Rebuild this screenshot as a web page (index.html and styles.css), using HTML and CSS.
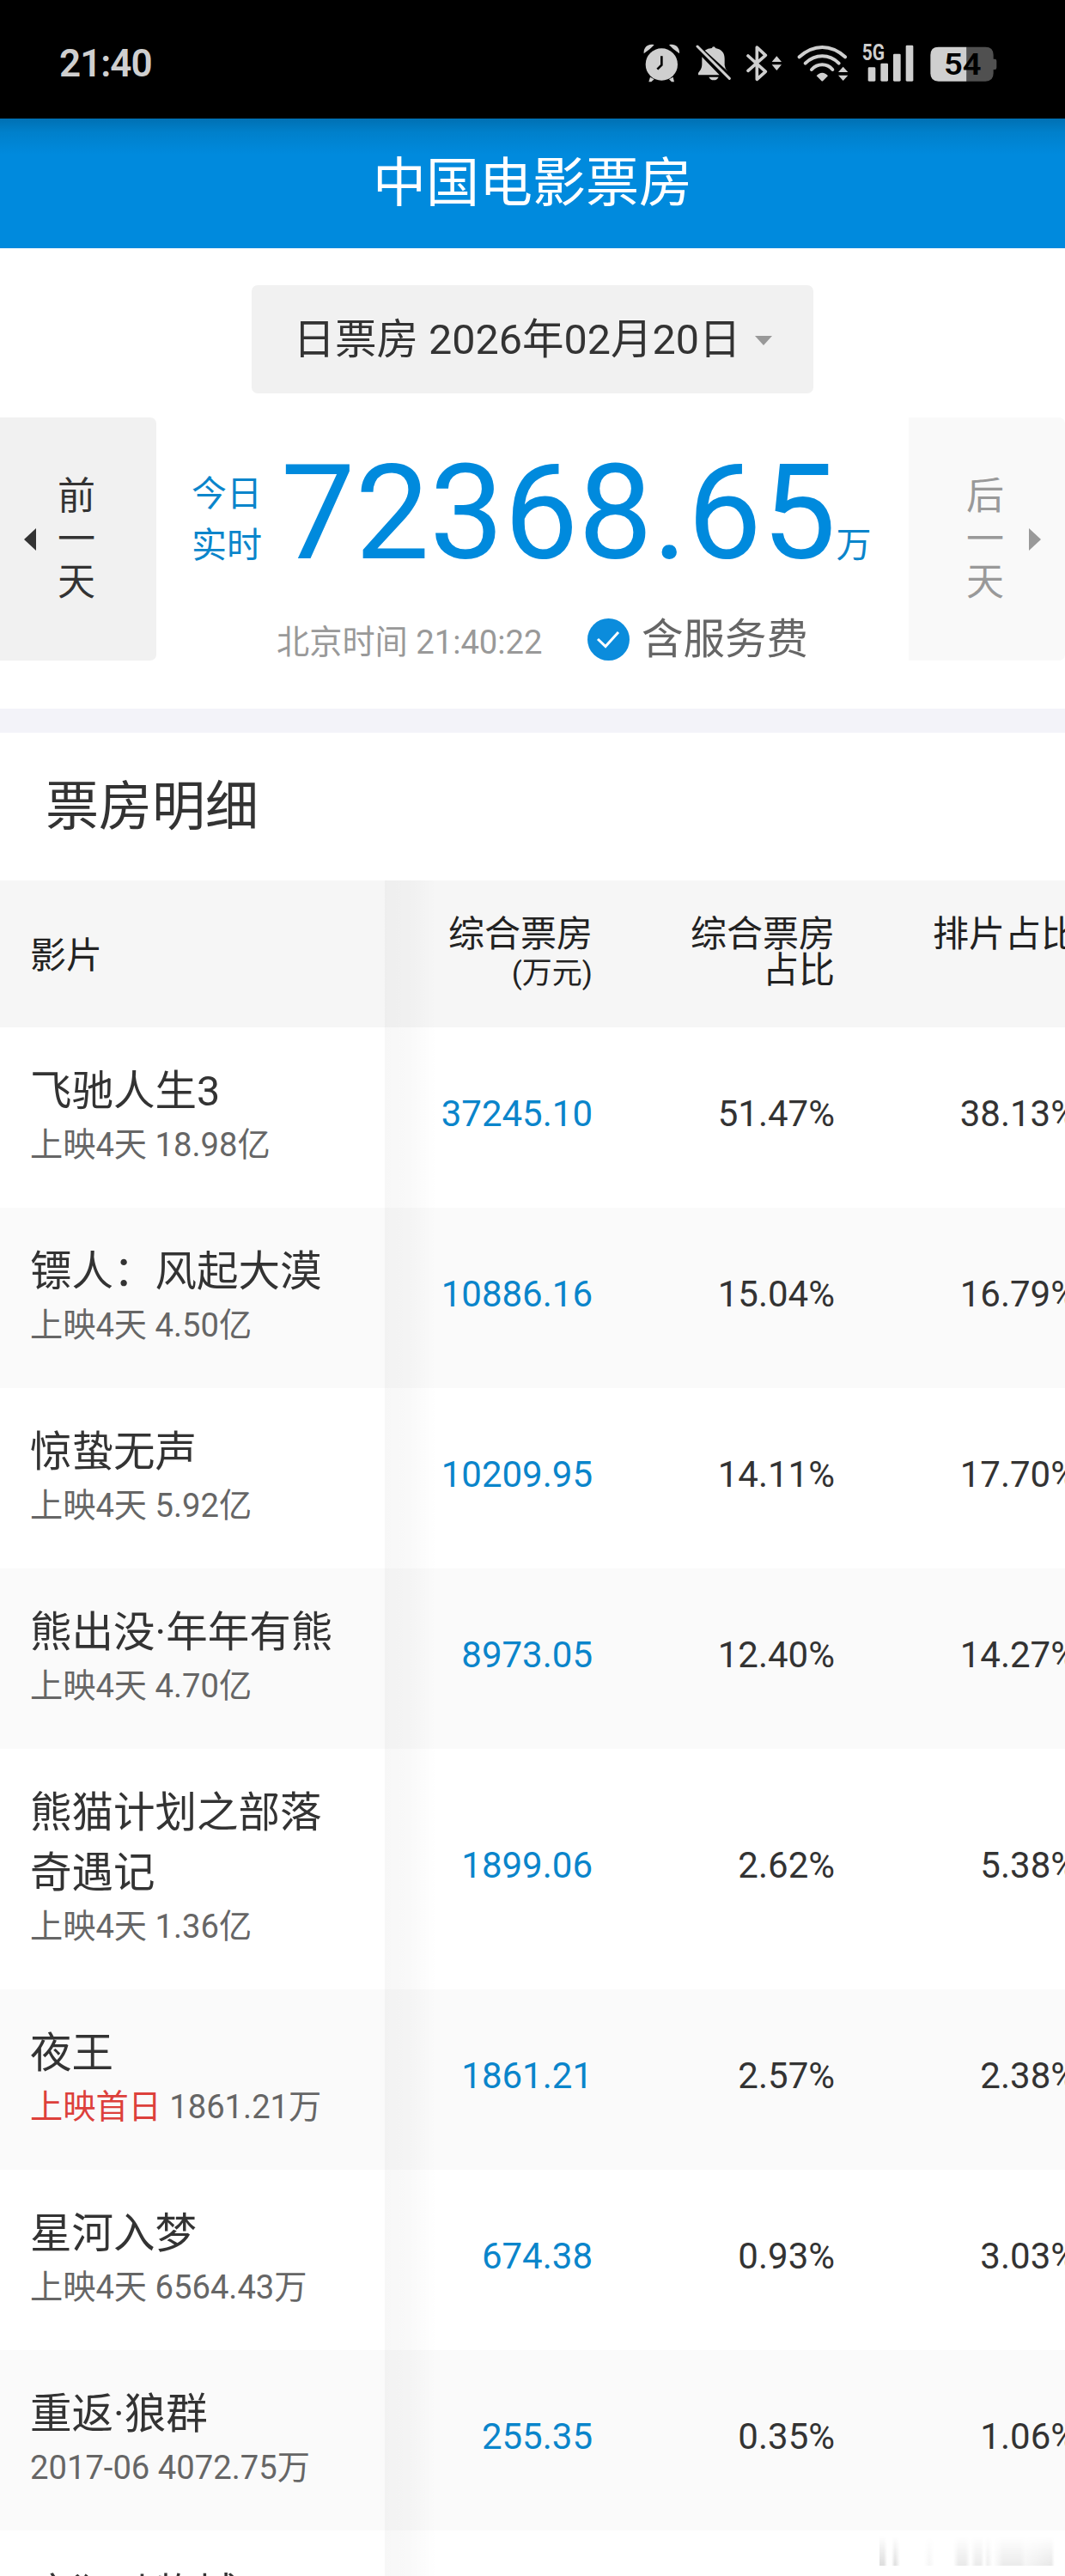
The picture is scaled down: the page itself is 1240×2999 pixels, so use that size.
FILE: index.html
```html
<!DOCTYPE html>
<html lang="zh-CN">
<head>
  <meta charset="UTF-8">
  <title>中国电影票房</title>
  <link rel="stylesheet" href="styles.css">
</head>
<body>

  <div class="status-bar">
    <span class="clock">21:40</span>
    <div class="status-icons">
      <!-- 闹钟 -->
      <svg class="ic-alarm" width="43" height="45" viewBox="88 64 129 135" fill="#cfcfcf">
        <circle cx="152" cy="136" r="56"/>
        <path d="M90 98C88 76 106 62 126 68Q112 84 90 98ZM214 98C216 76 198 62 178 68Q192 84 214 98Z"/>
        <path d="M112 180L107 197H116L126 188ZM192 180L196 197H187L178 188Z"/>
        <path d="M152 107V138L137 153" fill="none" stroke="#000" stroke-width="8"/>
      </svg>
      <!-- 静音 -->
      <svg class="ic-bell" width="42" height="45" viewBox="271 64 126 135" fill="#cfcfcf">
        <path d="M303 87Q313 80 328 79Q328 74 334 74Q339 74 340 79C362 83 372 96 372 116V138Q373 151 383 160Z"/>
        <path d="M293 110L354 173H280Q277 167 284 160Q293 150 293 135Z"/>
        <path d="M317 180H351Q346 191 334 191Q322 191 317 180Z"/>
        <path d="M277 73L389 185" stroke="#cfcfcf" stroke-width="9" stroke-linecap="round"/>
      </svg>
      <!-- 蓝牙 -->
      <svg class="ic-bt" width="42" height="45" viewBox="449 64 126 135" fill="none">
        <path d="M455 106L516 161L486 188V76L516 104L455 158" stroke="#cfcfcf" stroke-width="11" stroke-linecap="round" stroke-linejoin="round"/>
        <path d="M555 107L572 127H538ZM555 157L572 137H538Z" fill="#cfcfcf"/>
      </svg>
      <!-- WiFi -->
      <svg class="ic-wifi" width="60" height="45" viewBox="625 64 180 135" fill="none">
        <g stroke="#cfcfcf" stroke-width="12" stroke-linecap="round">
          <path d="M633 110Q671 76 713 76Q756 76 793 110"/>
          <path d="M654 132Q680 107 713 107Q746 107 771 132"/>
          <path d="M676 154Q692 137 713 137Q734 137 749 154"/>
        </g>
        <path d="M693 176Q702 165 713 165Q724 165 733 176L716 193Q713 196 710 193Z" fill="#cfcfcf"/>
        <path d="M786 144L803 163H769ZM786 193L803 174H769Z" fill="#cfcfcf"/>
      </svg>
      <!-- 5G 信号 -->
      <svg class="ic-signal" width="61" height="45" viewBox="851 64 183 135" fill="#cfcfcf">
        <text class="net" x="853" y="121" textLength="79" lengthAdjust="spacingAndGlyphs">5G</text>
        <rect x="874" y="146" width="26" height="49" rx="4"/>
        <rect x="918" y="132" width="26" height="63" rx="4"/>
        <rect x="962" y="99" width="26" height="96" rx="4"/>
        <rect x="1006" y="69" width="26" height="126" rx="4"/>
      </svg>
      <!-- 电池 -->
      <svg class="ic-battery" width="78" height="45" viewBox="1091 64 234 135">
        <path d="M1218 75H1284Q1312 75 1312 103V117H1317Q1323 117 1323 124V147Q1323 154 1317 154H1312V167Q1312 195 1284 195H1218Z" fill="#505050"/>
        <path d="M1218 75H1120Q1092 75 1092 103V167Q1092 195 1120 195H1218Z" fill="#cfcfcf"/>
        <text class="level" x="1139" y="173" textLength="131" lengthAdjust="spacingAndGlyphs">54</text>
      </svg>
    </div>
  </div>

  <h1 class="header">中国电影票房</h1>

  <div class="summary">
    <div class="date-picker">日票房 2026年02月20日<i class="caret"></i></div>

    <div class="day-row">
      <div class="day-btn prev"><i class="arrow left"></i><span>前<br>一<br>天</span></div>
      <div class="total">
        <div class="total-main">
          <span class="today">今日<br>实时</span>
          <span class="amount">72368.65</span>
          <span class="unit">万</span>
        </div>
        <div class="total-info">
          <span class="beijing">北京时间 21:40:22</span>
          <svg class="check" width="49" height="49" viewBox="0 0 49 49">
            <circle cx="24.5" cy="24.5" r="24.5" fill="#0b8cdc"/>
            <path d="M12 24L21 32.5L36 16" fill="none" stroke="#fff" stroke-width="3"/>
          </svg>
          <span class="fee">含服务费</span>
        </div>
      </div>
      <div class="day-btn next"><span>后<br>一<br>天</span><i class="arrow right"></i></div>
    </div>
  </div>

  <h2 class="section-title">票房明细</h2>

  <div class="table">
    <div class="row head">
      <div class="film">影片</div>
      <div>综合票房<br><small>(万元)</small></div>
      <div>综合票房<br>占比</div>
      <div>排片占比</div>
    </div>
    <div class="row">
      <div class="film"><p>飞驰人生3</p><small>上映4天 18.98亿</small></div>
      <div class="box">37245.10</div><div>51.47%</div><div>38.13%</div>
    </div>
    <div class="row">
      <div class="film"><p>镖人：风起大漠</p><small>上映4天 4.50亿</small></div>
      <div class="box">10886.16</div><div>15.04%</div><div>16.79%</div>
    </div>
    <div class="row">
      <div class="film"><p>惊蛰无声</p><small>上映4天 5.92亿</small></div>
      <div class="box">10209.95</div><div>14.11%</div><div>17.70%</div>
    </div>
    <div class="row">
      <div class="film"><p>熊出没·年年有熊</p><small>上映4天 4.70亿</small></div>
      <div class="box">8973.05</div><div>12.40%</div><div>14.27%</div>
    </div>
    <div class="row">
      <div class="film"><p>熊猫计划之部落奇遇记</p><small>上映4天 1.36亿</small></div>
      <div class="box">1899.06</div><div>2.62%</div><div>5.38%</div>
    </div>
    <div class="row">
      <div class="film"><p>夜王</p><small><em>上映首日</em> 1861.21万</small></div>
      <div class="box">1861.21</div><div>2.57%</div><div>2.38%</div>
    </div>
    <div class="row">
      <div class="film"><p>星河入梦</p><small>上映4天 6564.43万</small></div>
      <div class="box">674.38</div><div>0.93%</div><div>3.03%</div>
    </div>
    <div class="row">
      <div class="film"><p>重返·狼群</p><small>2017-06 4072.75万</small></div>
      <div class="box">255.35</div><div>0.35%</div><div>1.06%</div>
    </div>
    <div class="row last">
      <div class="film"><p>疯狂动物城2</p></div>
    </div>
  </div>

  <div class="watermark"></div>

</body>
</html>
```
FILE: styles.css
```css
* {
  box-sizing: border-box;
  margin: 0;
  padding: 0;
}
html {
  height: 2999px;
  overflow: hidden;
}
body {
  position: relative;
  width: 1240px;
  height: 2999px;
  overflow: hidden;
  background: #fff;
  color: #333;
  font-family: Roboto, "Noto Sans CJK SC", sans-serif;
}

/* 状态栏 */
.status-bar {
  height: 138px;
  padding: 0 79px 0 69px;
  display: flex;
  justify-content: space-between;
  background: #000;
}
.clock {
  margin-top: 48px;
  font-size: 44px;
  line-height: 52px;
  font-weight: 600;
  letter-spacing: -1px;
  color: #cfcfcf;
}
.status-icons {
  display: flex;
  margin-top: 51px;
}
.ic-bell { margin-left: 18px; }
.ic-bt { margin-left: 17px; }
.ic-wifi { margin-left: 17px; }
.ic-signal { margin-left: 15px; }
.ic-battery { margin-left: 19px; }
.net {
  font-size: 75px;
  font-weight: 700;
}
.level {
  font-size: 106px;
  font-weight: 600;
}

.header {
  height: 151px;
  background: linear-gradient(#0070b3, #0080cb 16px, #008add 42px, #008add);
  color: #fff;
  font-size: 62px;
  font-weight: 400;
  line-height: 151px;
  text-align: center;
}

/* 当日总票房 */
.summary {
  height: 564px;
  padding-top: 43px;
  border-bottom: 28px solid #f3f3f9;
}
.date-picker {
  width: 654px;
  height: 126px;
  margin: 0 auto;
  padding-bottom: 8px;
  display: flex;
  align-items: center;
  justify-content: center;
  background: #f1f1f1;
  border-radius: 7px;
  font-size: 48.5px;
}
.caret {
  margin: 11px 0 0 16px;
  border: 10px solid transparent;
  border-top: 11px solid #999;
  border-bottom: 0;
}
.day-row {
  display: flex;
  justify-content: space-between;
  height: 283px;
  margin-top: 28px;
}
.day-btn {
  width: 182px;
  display: flex;
  align-items: center;
  background: #f1f1f1;
  border-radius: 0 7px 7px 0;
  font-size: 44px;
  line-height: 50px;
}
.day-btn.next {
  padding-left: 67px;
  background: #f9f9f9;
  color: #999;
}
.arrow {
  border: 13px solid transparent;
}
.arrow.left {
  margin: 0 25px 0 28px;
  border-left: 0;
  border-right: 14px solid #333;
}
.arrow.right {
  margin-left: 29px;
  border-right: 0;
  border-left: 14px solid #999;
}
.total {
  flex: 1;
}
.total-main {
  display: flex;
  height: 190px;
  padding-left: 41px;
  color: #0a85cb;
}
.today {
  width: 104px;
  padding-top: 59px;
  font-size: 41px;
  line-height: 60px;
}
.amount {
  margin-top: 21px;
  font-size: 154px;
  line-height: 182px;
  color: #008add;
}
.unit {
  padding-top: 119px;
  font-size: 41px;
  line-height: 60px;
}
.total-info {
  display: flex;
  padding: 44px 0 0 140px;
  line-height: 49px;
}
.beijing {
  width: 362px;
  font-size: 38.2px;
  line-height: 56px;
  color: #999;
}
.fee {
  margin-left: 14px;
  font-size: 48.5px;
  line-height: 50px;
  color: #666;
}

/* 票房明细 */
.section-title {
  height: 172px;
  padding-left: 53px;
  font-size: 62px;
  font-weight: 400;
  line-height: 173px;
}
.table {
  position: relative;
}
.table::after {
  content: "";
  position: absolute;
  top: 0;
  left: 448px;
  width: 60px;
  height: 100%;
  background: linear-gradient(to right, rgba(0,0,0,.032), rgba(0,0,0,.025) 50%, rgba(0,0,0,0));
}
.row {
  display: grid;
  grid-template-columns: 448px 242px 282px 282px;
  align-items: center;
  min-height: 210px;
  font-size: 42px;
  text-align: right;
}
.row:nth-child(odd) {
  background: #fafafa;
}
.row > div {
  padding-bottom: 10px;
}
.row .film {
  align-self: start;
  padding: 40px 50px 46px 35px;
  text-align: left;
}
.film p {
  font-size: 48.5px;
  line-height: 70px;
}
.film small {
  display: block;
  font-size: 38.2px;
  line-height: 54px;
  color: #666;
}
.film em {
  font-style: normal;
  color: #dd403b;
}
.row .box {
  color: #0a85cb;
}
.row.last {
  min-height: 53px;
  height: 53px;
  overflow: hidden;
  background: #fff;
}
.row.head {
  min-height: 171px;
  align-items: start;
  background: #f6f6f6;
  color: #222;
  line-height: 42px;
}
.row.head > div {
  padding: 42px 0 0;
}
.row.head .film {
  padding: 67px 0 0 35px;
}
.head small {
  font-size: 35px;
  line-height: 50px;
}

/* 右下角淡水印 */
.watermark {
  position: absolute;
  right: 12px;
  bottom: 12px;
  width: 204px;
  height: 34px;
  background: linear-gradient(to right, #ddd 0 5px, #fff 9px 14px, #ddd 18px, #fff 24px 52px, #f5f5f5 58px, #fff 64px 86px, #e9e9e9 92px 100px, #fff 106px, #ebebeb 112px 118px, #fff 122px, #eee 126px, #fff 132px, #ebebeb 144px 164px, #f5f5f5 170px, #e8e8e8 200px, #fff);
  -webkit-mask-image: linear-gradient(transparent, #000);
  mask-image: linear-gradient(transparent, #000);
}
```
